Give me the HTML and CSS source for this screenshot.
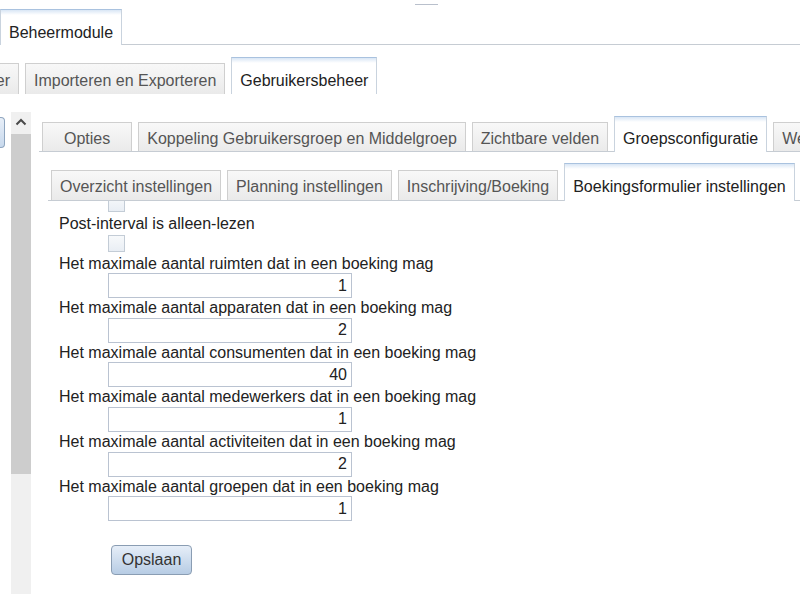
FILE: index.html
```html
<!DOCTYPE html>
<html lang="nl">

<head>
    <meta charset="UTF-8">
    <meta name="viewport" content="width=device-width, initial-scale=1.0">
    <title>Beheermodule</title>
    <link rel="stylesheet" href="styles.css">
</head>

<body>
    <!-- klein streepje bovenaan -->
    <div class="topline"></div>

    <!-- hoofdtab -->
    <div class="tabs main">
        <span class="tab on">Beheermodule</span>
    </div>

    <!-- tweede niveau -->
    <div class="tabs second">
        <span class="tab cut">Middelbeheer</span>
        <span class="tab">Importeren en Exporteren</span>
        <span class="tab on">Gebruikersbeheer</span>
    </div>

    <div class="main-area">
        <!-- linker kolom: knop + scrollbalk -->
        <div class="side">
            <span class="side-btn"></span>
            <div class="scrollbar">
                <div class="sb-up">
                    <svg width="12" height="8" viewBox="0 0 12 8">
                        <path d="M1.5 6.5 L6 2 L10.5 6.5" fill="none" stroke="#4a4a4a" stroke-width="2"/>
                    </svg>
                </div>
                <div class="sb-thumb"></div>
            </div>
        </div>

        <!-- paneel -->
        <div class="panel">
            <div class="tabs third">
                <span class="tab wide">Opties</span>
                <span class="tab">Koppeling Gebruikersgroep en Middelgroep</span>
                <span class="tab">Zichtbare velden</span>
                <span class="tab on">Groepsconfiguratie</span>
                <span class="tab">Weergave</span>
            </div>

            <div class="subpanel">
                <div class="tabs fourth">
                    <span class="tab">Overzicht instellingen</span>
                    <span class="tab">Planning instellingen</span>
                    <span class="tab">Inschrijving/Boeking</span>
                    <span class="tab on">Boekingsformulier instellingen</span>
                    <span class="tab">Overige</span>
                </div>

                <!-- formulier (gescrold) -->
                <div class="form">
                    <input type="checkbox" class="chk first">
                    <div class="lbl">Post-interval is alleen-lezen</div>
                    <input type="checkbox" class="chk">
                    <div class="lbl">Het maximale aantal ruimten dat in een boeking mag</div>
                    <input type="text" class="num" value="1">
                    <div class="lbl">Het maximale aantal apparaten dat in een boeking mag</div>
                    <input type="text" class="num" value="2">
                    <div class="lbl">Het maximale aantal consumenten dat in een boeking mag</div>
                    <input type="text" class="num" value="40">
                    <div class="lbl">Het maximale aantal medewerkers dat in een boeking mag</div>
                    <input type="text" class="num" value="1">
                    <div class="lbl">Het maximale aantal activiteiten dat in een boeking mag</div>
                    <input type="text" class="num" value="2">
                    <div class="lbl">Het maximale aantal groepen dat in een boeking mag</div>
                    <input type="text" class="num" value="1">
                    <button class="save">Opslaan</button>
                </div>
            </div>
        </div>
    </div>
</body>

</html>
```

FILE: styles.css
```css
html,
body {
    margin: 0;
    padding: 0;
    height: 100vh;
    overflow: hidden;
}

body {
    display: flex;
    flex-direction: column;
    background: #fff;
    font-family: "Liberation Sans", Arial, sans-serif;
    font-size: 16px;
    color: #222;
}

/* klein streepje */
.topline {
    width: 23px;
    height: 1px;
    margin: 4px 0 0 415px;
    background: #b9c0cc;
}

/* tabbalken */
.tabs {
    display: flex;
    align-items: flex-end;
    gap: 6px;
    border-bottom: 1px solid #c6ccd3;
}

.tab {
    flex-shrink: 0;
    white-space: nowrap;
    line-height: 18px;
    padding: 7px 8px 3px;
    border: 1px solid #cfcfcf;
    border-bottom: 0;
    background: linear-gradient(#f8f8f8, #eaeaea);
    color: #555;
}

/* actieve tab */
.tab.on {
    margin-bottom: -1px;
    padding-bottom: 4px;
    border-color: #c9d3de;
    border-top-color: #a9c2df;
    background: linear-gradient(#d9e6f5, #fff 5px);
    color: #222;
}

.tabs.main {
    margin-top: 4px;
}

.tabs.main .tab {
    padding: 14px 8px 3px;
}

.tabs.second {
    margin-top: 12px;
    border-bottom: 0;
}

.tabs.second .tab {
    padding: 8px 8px 4px;
}

.tabs.second .tab.on {
    margin-bottom: 0;
    padding-top: 14px;
}

.tab.cut {
    margin-left: -96px;
}

/* hoofdgebied */
.main-area {
    flex: 1;
    display: flex;
    margin-top: 18px;
    min-height: 0;
}

.side {
    display: flex;
    align-items: flex-start;
    width: 39px;
    flex-shrink: 0;
}

.side-btn {
    width: 4px;
    height: 29px;
    margin-top: 5px;
    border: 1px solid #8ea5bf;
    border-left: 0;
    border-radius: 0 4px 4px 0;
    background: linear-gradient(#e8eff8, #c8d9ed);
}

.scrollbar {
    width: 20px;
    height: 100%;
    margin-left: 6px;
    background: #f0f0f0;
}

.sb-up {
    height: 22px;
    display: flex;
    justify-content: center;
    align-items: center;
}

.sb-up svg {
    margin-top: -3px;
}

.sb-thumb {
    height: 340px;
    background: #cdcdcd;
}

/* paneel */
.panel {
    flex: 1;
    min-width: 0;
    padding-top: 4px;
}

.tabs.third {
    padding-left: 3px;
}

.tabs.third .tab.on {
    padding-top: 13px;
}

.tab.wide {
    padding-left: 21px;
    padding-right: 21px;
}

.subpanel {
    margin: 11px 0 0 9px;
}

.tabs.fourth {
    padding-left: 3px;
}

.tabs.fourth .tab {
    padding-bottom: 4px;
}

.tabs.fourth .tab.on {
    padding-top: 14px;
    padding-bottom: 5px;
}

/* formulier */
.form {
    padding-left: 11px;
    overflow: hidden;
}

.lbl {
    line-height: 19.6px;
    white-space: nowrap;
}

.chk {
    appearance: none;
    display: block;
    box-sizing: border-box;
    width: 17px;
    height: 17px;
    margin: 1px 0 2px 49px;
    border: 1px solid #c3ccd6;
    background: linear-gradient(#f7f9fb, #e9eef4);
}

.chk.first {
    margin-top: -6px;
}

.num {
    display: block;
    box-sizing: border-box;
    width: 244px;
    height: 25px;
    margin: 0 0 0 49px;
    padding: 0 4px;
    border: 1px solid #bac3d1;
    font-family: inherit;
    font-size: 16px;
    color: #222;
    text-align: right;
}

.save {
    display: block;
    box-sizing: border-box;
    width: 81px;
    height: 30px;
    margin: 24px 0 0 52px;
    border: 1px solid #8a9db3;
    border-radius: 4px;
    background: linear-gradient(#e6eef8, #b7cce4);
    font-family: inherit;
    font-size: 16px;
    color: #333;
}
```
